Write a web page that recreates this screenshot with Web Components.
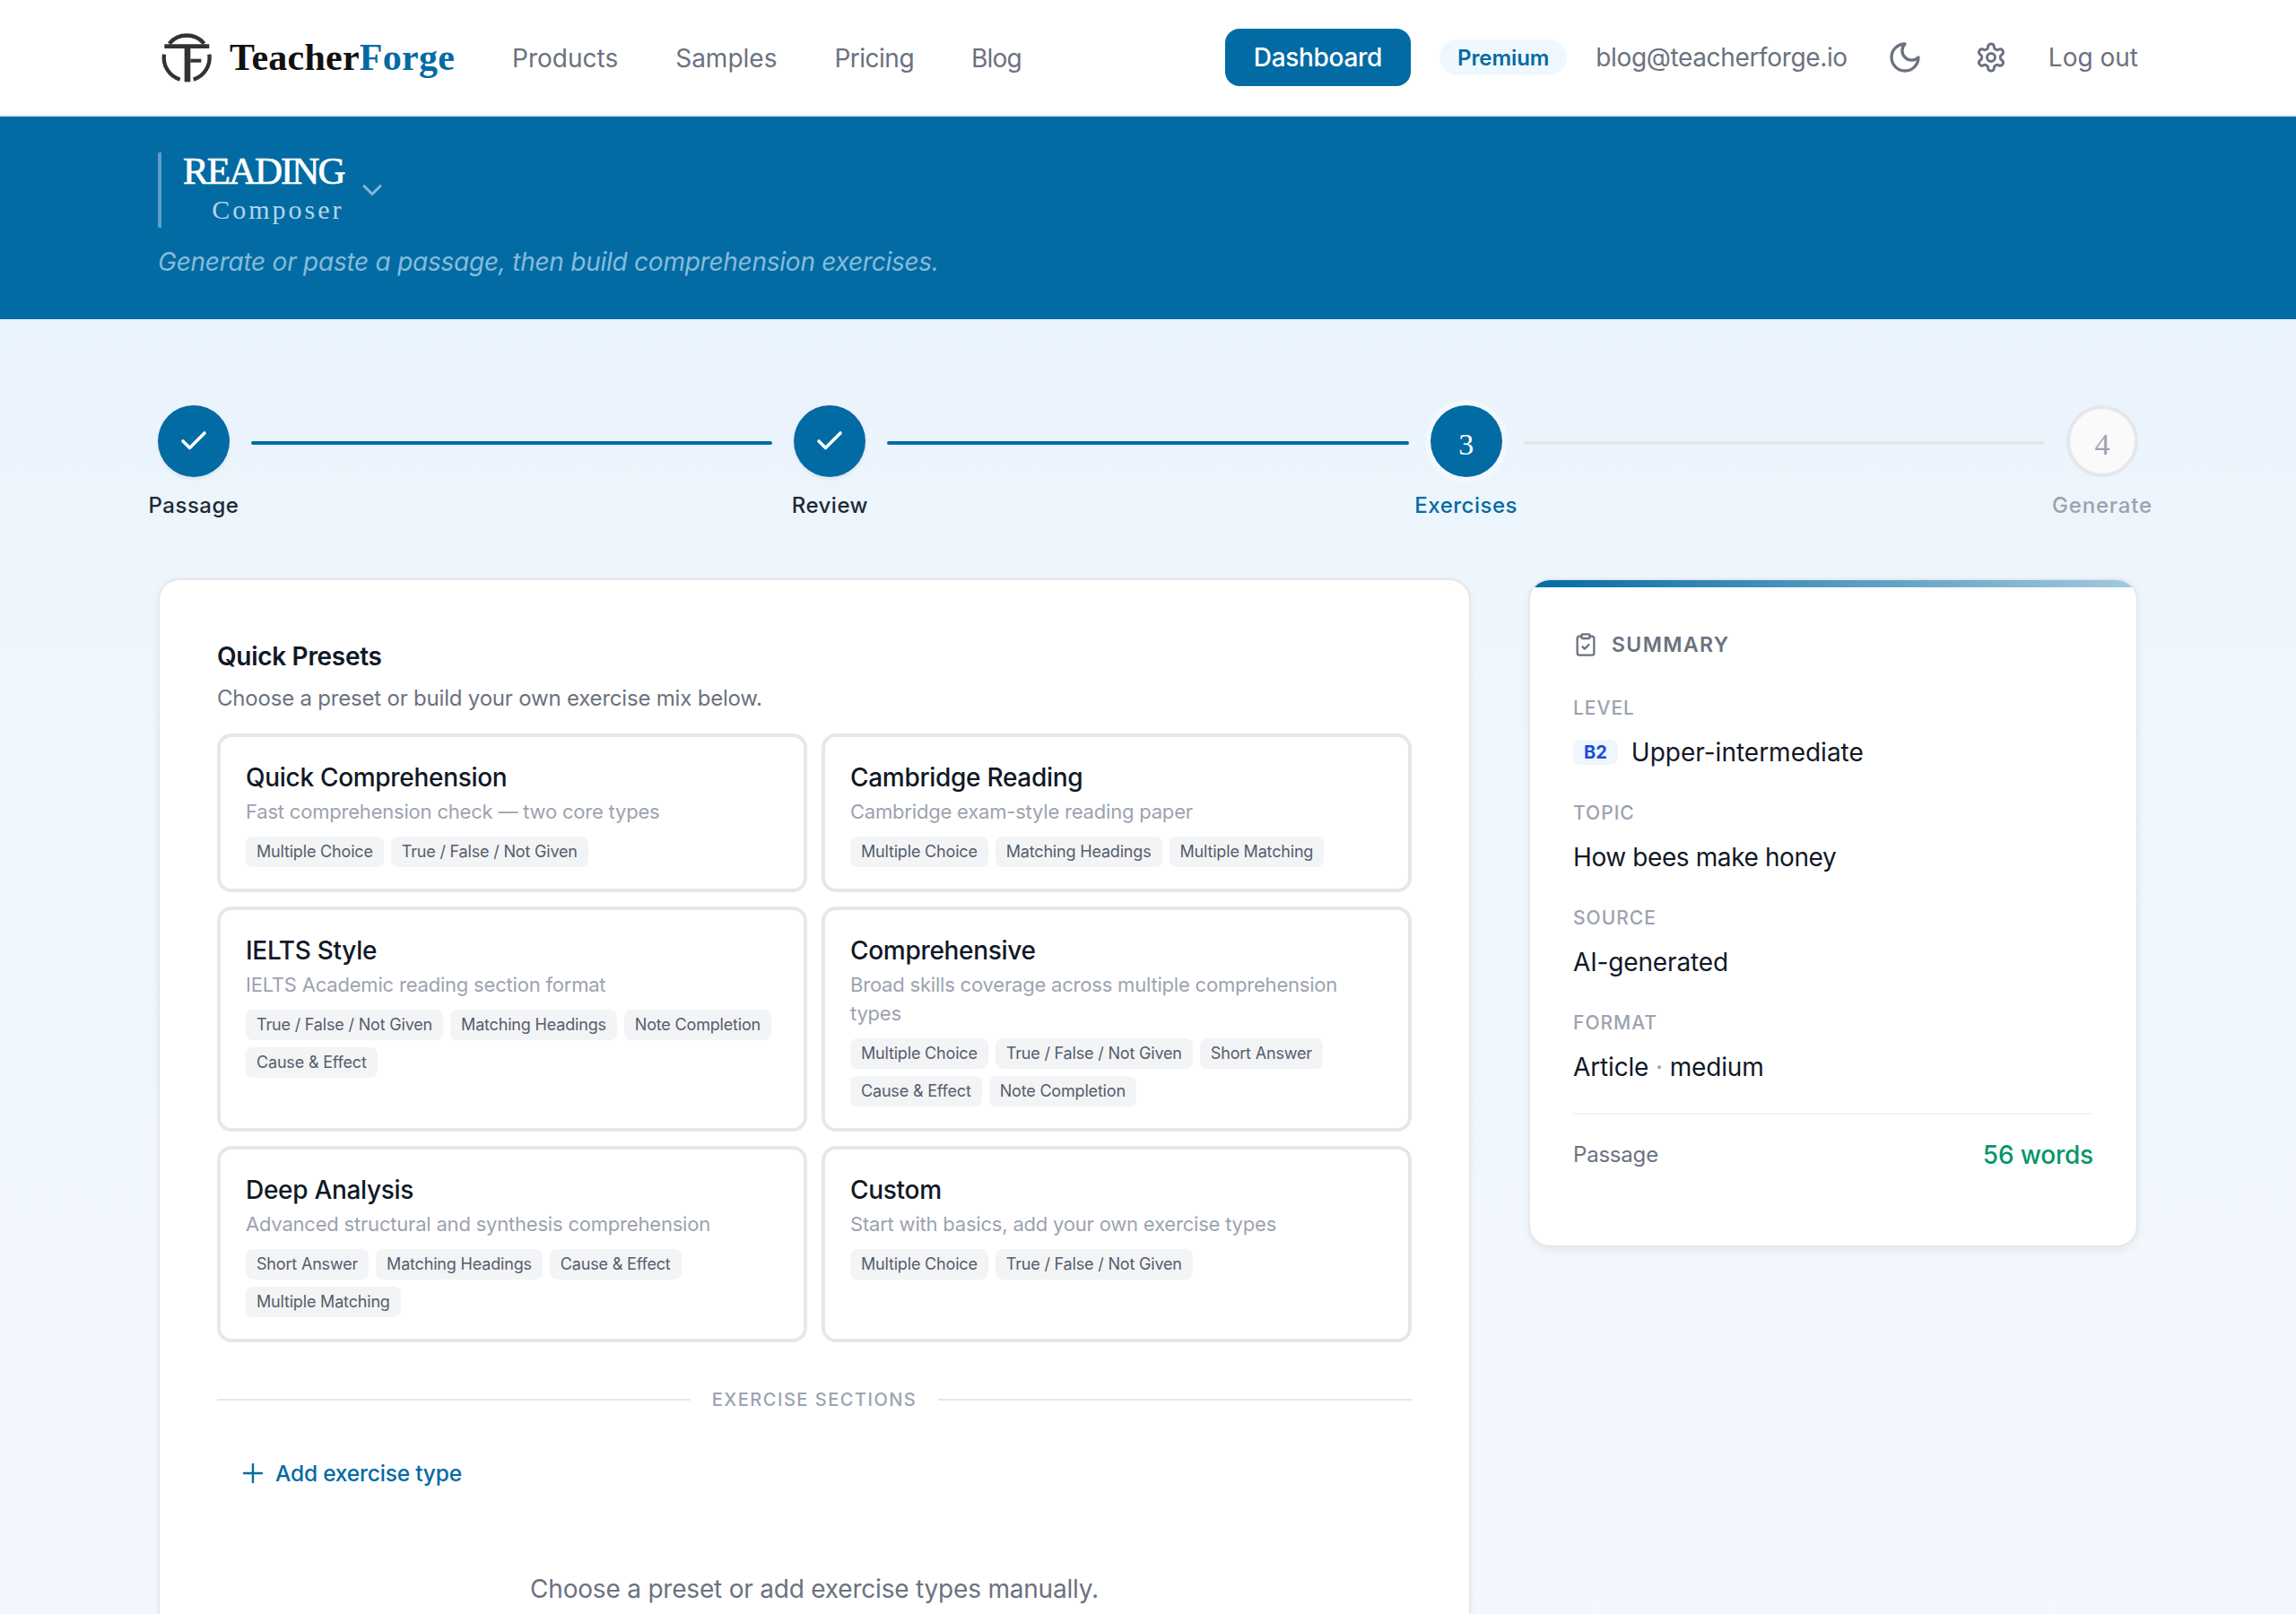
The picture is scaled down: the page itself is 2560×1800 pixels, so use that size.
<!DOCTYPE html>
<html lang="en">
<head>
<meta charset="utf-8">
<title>TeacherForge - Reading Composer</title>
<style>
  html, body { margin: 0; padding: 0; height: 1800px; overflow: hidden; }
  body {
    font-family: Inter, "Liberation Sans", sans-serif;
    color: #111827;
    background: linear-gradient(180deg, #e4f0fb 0%, #eff6fd 40%, #f3f8fe 100%);
  }
</style>
</head>
<body>

<tf-nav></tf-nav>
<tf-hero></tf-hero>

<tf-stepper>
  <tf-step state="done" label="Passage"></tf-step>
  <tf-link done></tf-link>
  <tf-step state="done" label="Review"></tf-step>
  <tf-link done></tf-link>
  <tf-step state="active" label="Exercises" num="3"></tf-step>
  <tf-link></tf-link>
  <tf-step state="todo" label="Generate" num="4"></tf-step>
</tf-stepper>

<tf-layout>
  <tf-panel>
    <tf-preset name="Quick Comprehension" desc="Fast comprehension check — two core types">
      <tf-tag>Multiple Choice</tf-tag><tf-tag>True / False / Not Given</tf-tag>
    </tf-preset>
    <tf-preset name="Cambridge Reading" desc="Cambridge exam-style reading paper">
      <tf-tag>Multiple Choice</tf-tag><tf-tag>Matching Headings</tf-tag><tf-tag>Multiple Matching</tf-tag>
    </tf-preset>
    <tf-preset name="IELTS Style" desc="IELTS Academic reading section format">
      <tf-tag>True / False / Not Given</tf-tag><tf-tag>Matching Headings</tf-tag><tf-tag>Note Completion</tf-tag><tf-tag>Cause &amp; Effect</tf-tag>
    </tf-preset>
    <tf-preset name="Comprehensive" desc="Broad skills coverage across multiple comprehension types">
      <tf-tag>Multiple Choice</tf-tag><tf-tag>True / False / Not Given</tf-tag><tf-tag>Short Answer</tf-tag><tf-tag>Cause &amp; Effect</tf-tag><tf-tag>Note Completion</tf-tag>
    </tf-preset>
    <tf-preset name="Deep Analysis" desc="Advanced structural and synthesis comprehension">
      <tf-tag>Short Answer</tf-tag><tf-tag>Matching Headings</tf-tag><tf-tag>Cause &amp; Effect</tf-tag><tf-tag>Multiple Matching</tf-tag>
    </tf-preset>
    <tf-preset name="Custom" desc="Start with basics, add your own exercise types">
      <tf-tag>Multiple Choice</tf-tag><tf-tag>True / False / Not Given</tf-tag>
    </tf-preset>
  </tf-panel>
  <tf-summary></tf-summary>
</tf-layout>

<script>
// small helper, every element gets its own open shadow root from a template
function defineEl(name, html, init) {
  const template = document.createElement('template');
  template.innerHTML = html;
  customElements.define(name, class extends HTMLElement {
    constructor() {
      super();
      this.attachShadow({ mode: 'open' }).appendChild(template.content.cloneNode(true));
    }
    connectedCallback() {
      if (init) init(this, this.shadowRoot);
    }
  });
}

defineEl('tf-nav', `
<style>
  :host { display: flex; align-items: center; box-sizing: border-box; height: 130px; padding: 0 176px; background: #fff; border-bottom: 2px solid #e5e7eb; color: #6b7280; font-size: 28px; }
  .logo { display: flex; align-items: center; margin-left: -6px; }
  .logo svg { display: block; }
  .brand { margin-left: 6px; font: bold 42px "Liberation Serif", serif; letter-spacing: .25px; color: #111; }
  .brand span { color: #036ba3; }
  .links { display: flex; gap: 64px; margin-left: 64px; padding-top: 1px; }
  .tight { letter-spacing: -.5px; }
  .tighter { letter-spacing: -.8px; }
  .right { display: flex; align-items: center; gap: 32px; margin-left: auto; }
  .dash { display: flex; align-items: center; padding: 0 32px; height: 64px; border-radius: 16px; background: #036ba3; color: #fff; font-weight: 500; letter-spacing: -.3px; }
  .premium { display: flex; align-items: center; height: 40px; padding: 0 20px; border-radius: 20px; background: #f0f8ff; color: #036ba3; font-size: 24px; font-weight: 600; letter-spacing: -.1px; }
  .mail { letter-spacing: -.35px; }
  .icon { width: 64px; display: flex; justify-content: center; color: #6b7280; }
  .icon svg { display: block; }
</style>
<div class="logo">
  <svg width="80" height="72" viewBox="0 0 240 216" fill="none" stroke="#333" stroke-width="13">
    <path d="M56 62A76 76 0 0 1 173 62"/>
    <path d="M39 98A76 76 0 0 0 92 182"/>
    <path d="M190 98A76 76 0 0 1 137 182"/>
    <path d="M40 71H190" stroke-width="14"/>
    <path d="M117 78V190" stroke-width="20"/>
    <path d="M127 119H163" stroke-width="12"/>
  </svg>
  <div class="brand">Teacher<span>Forge</span></div>
</div>
<div class="links"><div>Products</div><div>Samples</div><div class="tight">Pricing</div><div class="tighter">Blog</div></div>
<div class="right">
  <div class="dash">Dashboard</div>
  <div class="premium">Premium</div>
  <div class="mail">blog@teacherforge.io</div>
  <div class="icon">
    <svg width="40" height="40" viewBox="0 0 24 24" fill="none" stroke="currentColor" stroke-width="2" stroke-linecap="round" stroke-linejoin="round"><path d="M12 3a6 6 0 0 0 9 9 9 9 0 1 1-9-9Z"/></svg>
  </div>
  <div class="icon">
    <svg width="36" height="36" viewBox="0 0 24 24" fill="none" stroke="currentColor" stroke-width="2" stroke-linecap="round" stroke-linejoin="round"><path d="M12.22 2h-.44a2 2 0 0 0-2 2v.18a2 2 0 0 1-1 1.73l-.43.25a2 2 0 0 1-2 0l-.15-.08a2 2 0 0 0-2.73.73l-.22.38a2 2 0 0 0 .73 2.73l.15.1a2 2 0 0 1 1 1.72v.51a2 2 0 0 1-1 1.74l-.15.09a2 2 0 0 0-.73 2.73l.22.38a2 2 0 0 0 2.73.73l.15-.08a2 2 0 0 1 2 0l.43.25a2 2 0 0 1 1 1.73V20a2 2 0 0 0 2 2h.44a2 2 0 0 0 2-2v-.18a2 2 0 0 1 1-1.73l.43-.25a2 2 0 0 1 2 0l.15.08a2 2 0 0 0 2.73-.73l.22-.39a2 2 0 0 0-.73-2.73l-.15-.08a2 2 0 0 1-1-1.74v-.5a2 2 0 0 1 1-1.74l.15-.09a2 2 0 0 0 .73-2.73l-.22-.38a2 2 0 0 0-2.73-.73l-.15.08a2 2 0 0 1-2 0l-.43-.25a2 2 0 0 1-1-1.73V4a2 2 0 0 0-2-2z"/><circle cx="12" cy="12" r="3"/></svg>
  </div>
  <div>Log out</div>
</div>
`);

defineEl('tf-hero', `
<style>
  :host { display: block; box-sizing: border-box; height: 226px; padding: 40px 176px 0; background: #036ba3; }
  .head { display: flex; height: 84px; border-left: 4px solid #5f9fc5; border-radius: 2px; padding-left: 24px; width: max-content; }
  .titles { display: flex; flex-direction: column; align-items: flex-end; font-family: "Liberation Serif", serif; }
  .t1 { font-size: 43px; line-height: 42px; color: #fff; letter-spacing: -2px; -webkit-text-stroke: .7px #fff; }
  .t2 { font-size: 30px; line-height: 44px; color: #b4d5e9; letter-spacing: 3px; }
  svg { display: block; margin: 24px 0 0 14px; color: #7fb8d8; }
  p { margin: 18px 0 0; font-size: 28px; line-height: 40px; font-style: italic; color: #86bcdb; letter-spacing: -.25px; }
</style>
<div class="head">
  <div class="titles"><div class="t1">READING</div><div class="t2">Composer</div></div>
  <svg width="36" height="36" viewBox="0 0 24 24" fill="none" stroke="currentColor" stroke-width="2" stroke-linecap="round" stroke-linejoin="round"><path d="m6 9 6 6 6-6"/></svg>
</div>
<p>Generate or paste a passage, then build comprehension exercises.</p>
`);

defineEl('tf-stepper', `
<style>
  :host { display: flex; align-items: flex-start; padding: 96px 176px 0; height: 289px; box-sizing: border-box; }
</style>
<slot></slot>
`);

defineEl('tf-link', `
<style>
  :host { display: block; flex: 1; height: 4px; margin: 40px 24px 0; border-radius: 2px; background: #e5e7eb; }
  :host([done]) { background: #036ba3; }
</style>
`);

const checkSvg = '<svg width="36" height="36" viewBox="0 0 24 24" fill="none" stroke="#fff" stroke-width="2.4" stroke-linecap="round" stroke-linejoin="round"><path d="M20 6 9 17l-5-5"/></svg>';

defineEl('tf-step', `
<style>
  :host { display: flex; flex-direction: column; align-items: center; width: 80px; }
  .dot { box-sizing: border-box; width: 80px; height: 80px; border-radius: 50%; display: flex; align-items: center; justify-content: center; background: #036ba3; color: #fff; font: 34px "Liberation Serif", serif; box-shadow: 0 2px 4px rgba(0,0,0,.08); }
  .dot b { font-weight: normal; position: relative; top: 4px; }
  .label { margin-top: 14px; font-size: 24px; line-height: 36px; letter-spacing: .5px; font-weight: 500; color: #1f2937; white-space: nowrap; }
  :host([state="active"]) .dot { box-shadow: 0 0 0 6px #f2f8fe; }
  :host([state="active"]) .label { color: #036ba3; }
  :host([state="todo"]) .dot { background: #fafafa; border: 4px solid #e5e7eb; color: #9ca3af; box-shadow: none; }
  :host([state="todo"]) .label { color: #9ca3af; letter-spacing: .8px; }
</style>
<div class="dot"></div>
<div class="label"></div>
`, (el, root) => {
  root.querySelector('.label').textContent = el.getAttribute('label');
  const dot = root.querySelector('.dot');
  if (el.getAttribute('state') === 'done') dot.innerHTML = checkSvg;
  else dot.innerHTML = '<b>' + el.getAttribute('num') + '</b>';
});

defineEl('tf-layout', `
<style>
  :host { display: grid; grid-template-columns: 1fr 680px; gap: 64px; align-items: start; padding: 0 176px; }
</style>
<slot></slot>
`);

defineEl('tf-panel', `
<style>
  /* the card runs on below the fold in the reference, so it stops at the frame with no bottom border */
  :host { display: block; box-sizing: border-box; height: 1155px; overflow: hidden; padding: 65px 64px 0; background: #fff; border: 2px solid #e5e7eb; border-bottom: 0; border-radius: 24px 24px 0 0; box-shadow: 0 2px 8px rgba(0,0,0,.05); }
  h2 { margin: 0; font-size: 28px; line-height: 40px; font-weight: 600; color: #111827; letter-spacing: -.3px; }
  .sub { margin: 9px 0 0; font-size: 24px; line-height: 36px; color: #6b7280; letter-spacing: -.2px; }
  .grid { display: grid; grid-template-columns: 1fr 1fr; gap: 16px; margin-top: 21px; }
  .rule { display: flex; align-items: center; gap: 24px; margin-top: 50px; font-size: 20px; line-height: 28px; color: #9ca3af; letter-spacing: 1.5px; font-weight: 500; }
  .rule::before, .rule::after { content: ""; flex: 1; height: 2px; background: #e5e7eb; }
  .add { display: flex; align-items: center; gap: 13px; margin: 50px 0 0 28px; font-size: 24.5px; line-height: 36px; color: #036ba3; font-weight: 500; letter-spacing: -.2px; }
  .add svg { display: block; }
  .empty { margin-top: 91px; text-align: center; font-size: 28px; line-height: 40px; color: #6b7280; letter-spacing: -.2px; }
</style>
<h2>Quick Presets</h2>
<div class="sub">Choose a preset or build your own exercise mix below.</div>
<div class="grid"><slot></slot></div>
<div class="rule">EXERCISE SECTIONS</div>
<div class="add">
  <svg width="24" height="24" viewBox="0 0 24 24" fill="none" stroke="currentColor" stroke-width="2.4" stroke-linecap="round"><path d="M12 2v20M2 12h20"/></svg>
  <span>Add exercise type</span>
</div>
<div class="empty">Choose a preset or add exercise types manually.</div>
`);

defineEl('tf-preset', `
<style>
  :host { display: block; box-sizing: border-box; padding: 24px 28px; background: #fff; border: 4px solid #e5e7eb; border-radius: 16px; }
  .name { font-size: 28px; line-height: 43px; font-weight: 450; color: #111827; letter-spacing: -.3px; }
  .desc { font-size: 22px; line-height: 32px; color: #9ca3af; letter-spacing: -.2px; }
  .tags { display: flex; flex-wrap: wrap; gap: 8px; margin-top: 12px; }
</style>
<div class="name"></div>
<div class="desc"></div>
<div class="tags"><slot></slot></div>
`, (el, root) => {
  root.querySelector('.name').textContent = el.getAttribute('name');
  root.querySelector('.desc').textContent = el.getAttribute('desc');
});

defineEl('tf-tag', `
<style>
  :host { display: block; box-sizing: border-box; height: 34px; line-height: 34px; padding: 0 12px; border-radius: 8px; background: #f3f4f6; color: #555d6b; font-size: 18px; letter-spacing: -.18px; white-space: nowrap; }
</style>
<slot></slot>
`);

defineEl('tf-summary', `
<style>
  :host { display: block; box-sizing: border-box; height: 746px; position: relative; overflow: hidden; padding: 52px 48px 48px; background: #fff; border: 2px solid #e5e7eb; border-radius: 24px; box-shadow: 0 4px 10px rgba(0,0,0,.06); }
  .bar { position: absolute; top: 0; left: 0; right: 0; height: 8px; background: linear-gradient(90deg, #036ba3, #a3c9de); }
  .head { display: flex; align-items: center; gap: 15px; height: 40px; font-size: 23px; font-weight: 600; letter-spacing: 1.4px; color: #6b7280; }
  .head svg { display: block; }
  .lab { font-size: 21px; line-height: 30px; letter-spacing: 1px; color: #9ca3af; font-weight: 500; }
  .val { font-size: 28px; line-height: 40px; margin-top: 14px; color: #111827; letter-spacing: -.15px; display: flex; align-items: center; gap: 15px; }
  .val i { font-style: normal; color: #9ca3af; }
  .val.up { letter-spacing: 0; }
  .val.how { letter-spacing: -.4px; }
  .sec { margin-top: 33px; }
  .sec.first { margin-top: 36px; }
  .badge { display: block; height: 28px; line-height: 28px; padding: 0 12px; border-radius: 8px; background: #eff6ff; color: #1d4ed8; font-size: 20px; font-weight: 700; letter-spacing: 0; }
  .foot { display: flex; justify-content: space-between; align-items: center; margin-top: 31px; padding-top: 25px; border-top: 2px solid #f3f4f6; }
  .foot span { font-size: 24px; line-height: 40px; color: #6b7280; letter-spacing: -.2px; }
  .foot .w { font-size: 28px; font-weight: 500; color: #059669; }
</style>
<div class="bar"></div>
<div class="head">
  <svg width="28" height="28" viewBox="0 0 24 24" fill="none" stroke="currentColor" stroke-width="2" stroke-linecap="round" stroke-linejoin="round"><rect width="8" height="4" x="8" y="2" rx="1" ry="1"/><path d="M16 4h2a2 2 0 0 1 2 2v14a2 2 0 0 1-2 2H6a2 2 0 0 1-2-2V6a2 2 0 0 1 2-2h2"/><path d="m9 14 2 2 4-4"/></svg>
  <span>SUMMARY</span>
</div>
<div class="sec first"><div class="lab">LEVEL</div><div class="val up"><span class="badge">B2</span><span>Upper-intermediate</span></div></div>
<div class="sec"><div class="lab">TOPIC</div><div class="val how">How bees make honey</div></div>
<div class="sec"><div class="lab">SOURCE</div><div class="val">AI-generated</div></div>
<div class="sec"><div class="lab">FORMAT</div><div class="val"><span>Article <i>·</i> medium</span></div></div>
<div class="foot"><span>Passage</span><span class="w">56 words</span></div>
`);
</script>
</body>
</html>
